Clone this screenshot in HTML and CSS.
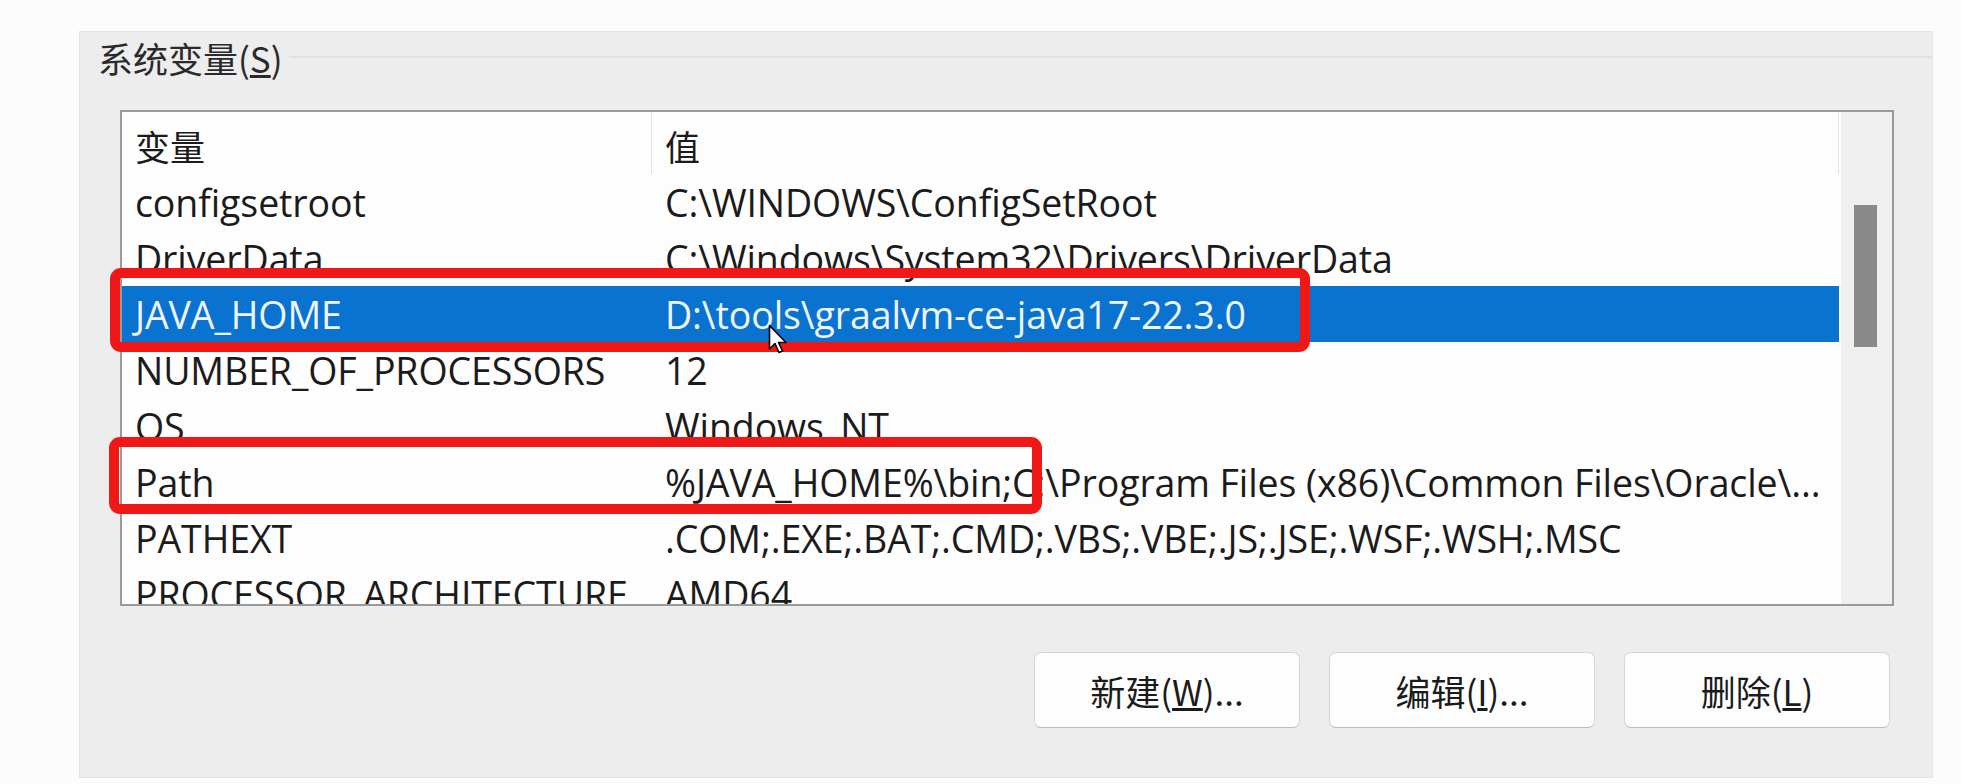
FILE: index.html
```html
<!DOCTYPE html>
<html lang="zh-CN">
<head>
<meta charset="utf-8">
<title>系统变量</title>
<link rel="stylesheet" href="styles.css">
</head>
<body>
<div class="panel">
  <div class="group-title">
    <span class="group-label">系统变量(<u>S</u>)</span>
    <span class="group-line"></span>
  </div>

  <div class="listbox">
    <div class="list-content">
      <div class="row header">
        <div class="cell c1">变量</div>
        <div class="cell c2">值</div>
      </div>
      <div class="row"><div class="cell c1">configsetroot</div><div class="cell c2">C:\WINDOWS\ConfigSetRoot</div></div>
      <div class="row"><div class="cell c1">DriverData</div><div class="cell c2">C:\Windows\System32\Drivers\DriverData</div></div>
      <div class="row selected"><div class="cell c1">JAVA_HOME</div><div class="cell c2">D:\tools\graalvm-ce-java17-22.3.0</div></div>
      <div class="row"><div class="cell c1">NUMBER_OF_PROCESSORS</div><div class="cell c2">12</div></div>
      <div class="row"><div class="cell c1">OS</div><div class="cell c2">Windows_NT</div></div>
      <div class="row"><div class="cell c1">Path</div><div class="cell c2">%JAVA_HOME%\bin;C:\Program Files (x86)\Common Files\Oracle\...</div></div>
      <div class="row"><div class="cell c1">PATHEXT</div><div class="cell c2">.COM;.EXE;.BAT;.CMD;.VBS;.VBE;.JS;.JSE;.WSF;.WSH;.MSC</div></div>
      <div class="row"><div class="cell c1">PROCESSOR_ARCHITECTURE</div><div class="cell c2">AMD64</div></div>
    </div>
    <div class="scrollbar"><div class="thumb"></div></div>
  </div>

  <div class="buttons">
    <button class="btn">新建(<u>W</u>)...</button>
    <button class="btn">编辑(<u>I</u>)...</button>
    <button class="btn">删除(<u>L</u>)</button>
  </div>

  <div class="mark mark-java"></div>
  <div class="mark mark-path"></div>

  <svg class="cursor" width="22" height="32" viewBox="0 0 22 32">
    <path d="M1.5 1.5 L1.5 25 L7 19.5 L11 28.5 L14.5 27 L10.5 18.5 L18 18.5 Z" fill="#ffffff" stroke="#000000" stroke-width="1.6" stroke-linejoin="round"/>
  </svg>
</div>
</body>
</html>
```

FILE: styles.css
```css
html, body {
  margin: 0;
  padding: 0;
}

body {
  width: 1961px;
  height: 784px;
  overflow: hidden;
  background: #fcfcfc;
  font-family: "Open Sans", "Noto Sans CJK SC", sans-serif;
  font-size: 35px;
  color: #1b1b1b;
}

.panel {
  position: relative;
  margin: 32px 0 0 80px;
  width: 1852px;
  height: 745px;
  background: #ededee;
  box-shadow: 0 0 0 1px #e4e4e6;
}

.group-title {
  display: flex;
  align-items: center;
  height: 50px;
}

.group-label {
  padding: 0 6px 0 18px;
  font-family: "Noto Sans CJK SC", sans-serif;
  color: #2a2a2a;
  white-space: nowrap;
}

.group-line {
  flex: 1;
  height: 2px;
  background: #e0e0e2;
}

.listbox {
  display: flex;
  margin: 28px 0 0 40px;
  width: 1774px;
  height: 496px;
  box-sizing: border-box;
  border: 2px solid #9a9a9a;
  background: #fdfdfd;
  overflow: hidden;
}

.list-content {
  flex: 1;
  overflow: hidden;
}

.row {
  display: flex;
  height: 56px;
  align-items: center;
  white-space: nowrap;
}

.cell {
  overflow: hidden;
  font-size: 37.5px;
  letter-spacing: -0.1px;
}

.row.header {
  height: 62px;
  align-items: stretch;
}

.header .cell {
  display: flex;
  align-items: center;
  padding-top: 4px;
  box-sizing: border-box;
  border-right: 1px solid #e3e3e3;
  font-family: "Noto Sans CJK SC", sans-serif;
  font-size: 35px;
  letter-spacing: 0;
}

.c1 {
  width: 530px;
  padding-left: 13px;
  box-sizing: border-box;
}

.c2 {
  flex: 1;
  padding-left: 13px;
}

.row.selected {
  background: #0a73cf;
  color: #eef5ff;
}

.scrollbar {
  width: 51px;
  margin-left: 2px;
  background: #efeff0;
  padding-top: 93px;
  box-sizing: border-box;
}

.thumb {
  margin-left: 13px;
  width: 23px;
  height: 142px;
  background: #898989;
}

.buttons {
  display: flex;
  justify-content: flex-end;
  gap: 29px;
  margin-top: 46px;
  padding-right: 42px;
}

.btn {
  width: 266px;
  height: 76px;
  background: #fdfdfd;
  border: 1px solid #d6d6d6;
  border-bottom-color: #bdbdbd;
  border-radius: 7px;
  font-family: "Noto Sans CJK SC", sans-serif;
  font-size: 35px;
  color: #1b1b1b;
  padding: 0;
}

.mark {
  position: absolute;
  box-sizing: border-box;
  border: 10px solid #f01717;
  border-radius: 11px;
}

.mark-java {
  left: 30px;
  top: 236px;
  width: 1200px;
  height: 84px;
}

.mark-path {
  left: 29px;
  top: 405px;
  width: 933px;
  height: 77px;
}

.cursor {
  position: absolute;
  left: 688px;
  top: 292px;
}
```
